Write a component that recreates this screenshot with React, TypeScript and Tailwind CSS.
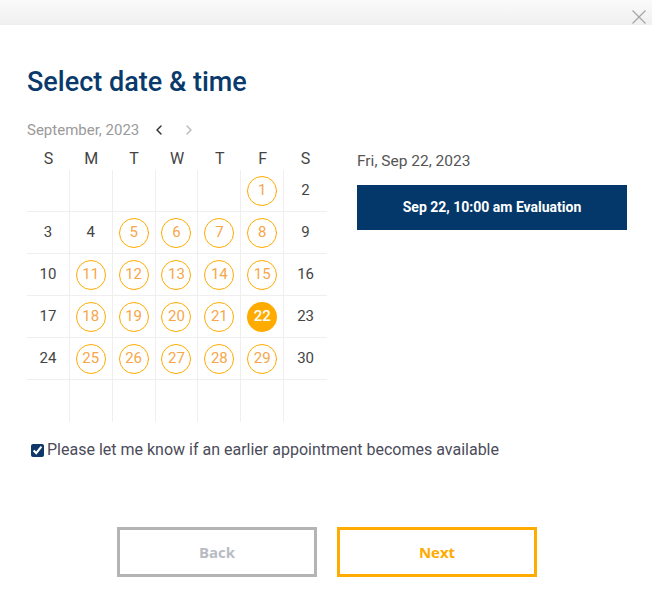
import { ChevronLeft, ChevronRight } from "lucide-react";

const days = ["S", "M", "T", "W", "T", "F", "S"];

// null = empty cell
const weeks: (number | null)[][] = [
  [null, null, null, null, null, 1, 2],
  [3, 4, 5, 6, 7, 8, 9],
  [10, 11, 12, 13, 14, 15, 16],
  [17, 18, 19, 20, 21, 22, 23],
  [24, 25, 26, 27, 28, 29, 30],
  [null, null, null, null, null, null, null],
];

const available = new Set([1, 5, 6, 7, 8, 11, 12, 13, 14, 15, 18, 19, 20, 21, 25, 26, 27, 28, 29]);
const selected = 22;

const DayCell = ({ day, last }: { day: number | null; last: boolean }) => {
  let inner = null;
  if (day === selected) {
    inner = (
      <span className="flex h-[30px] w-[30px] items-center justify-center rounded-full bg-[#ffab00] text-[15px] font-medium text-white">
        {day}
      </span>
    );
  } else if (day !== null && available.has(day)) {
    inner = (
      <span className="flex h-[30px] w-[30px] items-center justify-center rounded-full border border-[#ffab00] text-[15px] text-[#f8a64a]">
        {day}
      </span>
    );
  } else if (day !== null) {
    inner = <span className="text-[15px] text-[#444]">{day}</span>;
  }
  return (
    <div className={`flex items-center justify-center ${last ? "" : "border-r border-[#efefef]"}`}>
      {inner}
    </div>
  );
};

export default function App() {
  return (
    <div
      className="relative h-[606px] w-[652px] overflow-hidden bg-white"
      style={{ fontFamily: "Roboto, 'Liberation Sans', sans-serif" }}
    >
      <div className="h-[25px] bg-gradient-to-b from-[#fbfbfb] to-[#efefef]" />
      <button type="button" aria-label="Close" className="absolute right-[6px] top-[10px] text-[#a5a5a5]">
        <svg width="14" height="14" viewBox="0 0 14 14" fill="none" stroke="currentColor" strokeWidth="1.2">
          <path d="M0.5 0.5l13 13M13.5 0.5l-13 13" />
        </svg>
      </button>

      <div className="px-[27px]">
        <h1 className="mt-[42px] text-[27px] font-medium leading-[30px] text-[#0a3a6b]">Select date &amp; time</h1>

        <div className="mt-[21px] flex">
          <div className="w-[300px] shrink-0">
            <div className="flex h-[20px] items-center pt-[3px]">
              <span className="text-[15px] leading-[20px] text-[#9a9a9a]">September, 2023</span>
              <ChevronLeft className="ml-[12px] h-[16px] w-[16px] text-[#333]" strokeWidth={2.2} />
              <ChevronRight className="ml-[14px] h-[16px] w-[16px] text-[#bbb]" strokeWidth={2.2} />
            </div>
            <div className="mt-[9px] grid h-[23px] grid-cols-7">
              {days.map((d, i) => (
                <div key={i} className="text-center text-[16px] leading-[23px] text-[#444]">
                  {d}
                </div>
              ))}
            </div>
            <div>
              {weeks.map((week, r) => (
                <div
                  key={r}
                  className={`grid h-[42px] grid-cols-7 ${r < weeks.length - 1 ? "border-b border-[#efefef]" : ""}`}
                >
                  {week.map((day, c) => (
                    <DayCell key={c} day={day} last={c === 6} />
                  ))}
                </div>
              ))}
            </div>
          </div>

          <div className="ml-[30px] w-[270px] shrink-0 pt-[31px]">
            <div className="text-[15.5px] leading-[24px] text-[#555]">Fri, Sep 22, 2023</div>
            <button
              type="button"
              className="mt-[12px] flex h-[45px] w-full items-center justify-center bg-[#04386b] text-[14px] font-bold text-white"
            >
              Sep 22, 10:00 am Evaluation
            </button>
          </div>
        </div>

        <label className="mt-[16px] flex items-center">
          <input type="checkbox" defaultChecked className="ml-[4px] mr-[3px] h-[13px] w-[13px] accent-[#0f3868]" />
          <span className="text-[16px] leading-[24px] text-[#4b4b5a]">
            Please let me know if an earlier appointment becomes available
          </span>
        </label>
      </div>

      <div
        className="mt-[65px] flex justify-center gap-[20px] pl-[2px]"
        style={{ fontFamily: "'Open Sans', sans-serif" }}
      >
        <button
          type="button"
          className="h-[50px] w-[200px] border-[3px] border-[#b4b4b4] text-[15px] font-bold text-[#b8bcc2]"
        >
          Back
        </button>
        <button
          type="button"
          className="h-[50px] w-[200px] border-[3px] border-[#ffab00] text-[15px] font-bold text-[#ffab00]"
        >
          Next
        </button>
      </div>
    </div>
  );
}
